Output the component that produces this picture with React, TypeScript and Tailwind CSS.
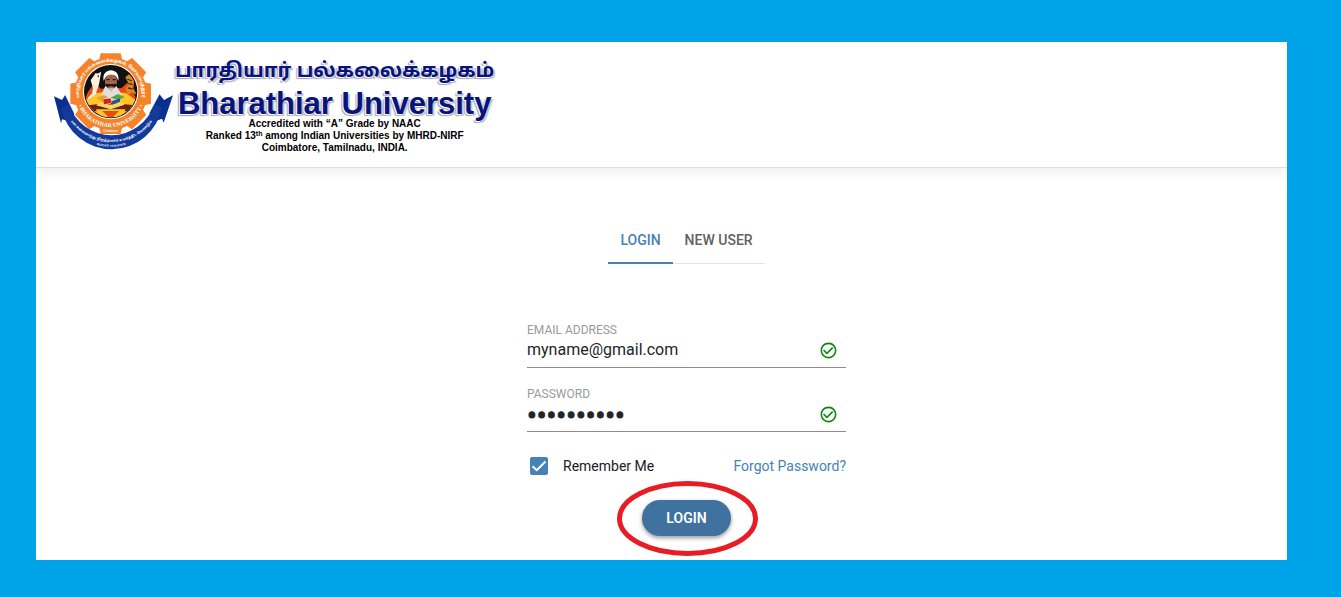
import { useState } from "react";
import type { InputHTMLAttributes } from "react";
import { MdCheckCircleOutline } from "react-icons/md";

const TEETH = [0, 45, 90, 135, 180, 225, 270, 315];

function Emblem() {
  return (
    <svg viewBox="30 24 375 312" className="h-[104px] w-[125px] shrink-0" role="img" aria-label="Bharathiar University emblem">
      <defs>
        <path id="ringTop" d="M124 190 A95 95 0 1 1 300 190" />
        <path id="ringBottom" d="M107 150 A105 105 0 0 0 317 150" />
        <path id="ribbonPath" d="M80 217 A152 152 0 0 0 350 217" />
        <path id="mottoPath" d="M150 301 A162 162 0 0 0 278 301" />
        <clipPath id="sceneClip"><circle cx="212" cy="149" r="77" /></clipPath>
      </defs>
      <path d="M42 163 L66 174 L76 158 L103 214 L96 232 L82 236 L66 232 L63 244 Z" fill="#0b2f8f" />
      <path d="M399 160 L372 174 L358 156 L328 212 L338 232 L350 236 L366 230 L371 242 Z" fill="#0b2f8f" />
      <g fill="#f5832b">
        {TEETH.map((angle) => (
          <path key={angle} d="M176 60 L182 34 H242 L248 60 Z" transform={`rotate(${angle} 212 155)`} />
        ))}
        <circle cx="212" cy="155" r="109" />
      </g>
      <path d="M64 200 A154 154 0 0 0 366 196 L343 186 A135 135 0 0 1 86 186 Z" fill="#123a9c" />
      <path d="M76 158 L103 214 M358 156 L328 212" stroke="#fff" strokeWidth="2" />
      <circle cx="212" cy="149" r="83" fill="#fff" />
      <circle cx="212" cy="149" r="80" fill="#111" />
      <g clipPath="url(#sceneClip)">
        <path d="M130 185 C140 152 152 136 166 122 L182 140 L245 138 L262 122 C274 140 286 160 294 182 V240 H130 Z" fill="#e84b16" />
        <path d="M132 178 L165 153 L210 149 L258 153 L292 178 L282 213 H144 Z" fill="#ffc426" />
        <path d="M144 190 L210 182 L285 190 L274 208 H154 Z" fill="#6e2014" />
        <path d="M168 202 H256 L245 236 H180 Z" fill="#ffc426" />
        <path d="M187 207 H237 L212 232 Z" fill="#e84b16" />
        <path d="M181 181 L210 188 L243 180 L254 188 L212 202 L168 190 Z" fill="#f7d763" />
        <path d="M167 93 C184 97 180 117 176 130 L167 157 L154 167 L159 138 L152 115 Z" fill="#fff0d8" />
        <path d="M171 99 L180 94 L177 111 M157 157 L145 170" stroke="#fff" strokeWidth="5" />
        <path d="M256 106 L267 97 L283 110 L280 139 L290 158 L275 151 L264 158 L257 142 L266 125 Z" fill="#e0862a" />
        <path d="M262 111 L276 117 M265 124 L278 128 M264 138 L278 141" stroke="#473016" strokeWidth="4" />
        <path d="M184 158 L196 132 H229 L246 159 L228 174 H198 Z" fill="#e4e0d8" />
        <ellipse cx="213" cy="119" rx="18" ry="24" fill="#a2674e" />
        <path d="M191 116 C182 76 242 73 235 116 L229 104 C221 95 205 96 197 105 Z" fill="#fff" />
        <path d="M195 130 C202 121 209 128 213 126 C219 128 224 121 232 130 L225 136 L213 132 L201 136 Z" fill="#1d1717" />
        <path d="M200 113 h9 m9 0 h9" stroke="#231715" strokeWidth="4" />
        <circle cx="213" cy="106" r="2" fill="#d11f24" />
        <path d="M205 138 L213 149 L222 138" fill="#bbb" />
        <path d="M169 169 L191 159 L211 169 L188 179 Z" fill="#e2a13a" />
        <path d="M211 167 L234 156 L254 165 L235 175 Z" fill="#55a84e" />
        <path d="M190 170 L212 164 L213 185 L194 186 Z" fill="#f6f0df" />
        <path d="M190 172 L212 169 L214 183 L192 187 Z" fill="#cf2424" />
        <path d="M215 178 L240 169 L240 179 L217 188 Z" fill="#2d4f9f" />
      </g>
      <g fill="#fff" textAnchor="middle">
        <text className="font-['Noto_Sans_Tamil','Noto_Sans',sans-serif] text-[13px] font-bold">
          <textPath href="#ringTop" startOffset="50%">பாரதியார் பல்கலைக்கழகம், கோயம்புத்தூர்</textPath>
        </text>
        <text className="font-['Liberation_Serif',serif] text-[17px] font-bold">
          <textPath href="#ringBottom" startOffset="50%">• BHARATHIAR UNIVERSITY •</textPath>
        </text>
        <text x="212" y="271" className="font-['Liberation_Sans',sans-serif] text-[8px] font-bold">Coimbatore</text>
        <text className="font-['Noto_Sans_Tamil','Noto_Sans',sans-serif] text-[10px] font-bold">
          <textPath href="#ribbonPath" startOffset="50%">பல கலைமாந்து திறத்தாரை உயர்த்திட வேண்டும்</textPath>
        </text>
        <text className="font-['Liberation_Sans',sans-serif] text-[8px] font-bold">
          <textPath href="#mottoPath" startOffset="50%">EDUCATE TO ELEVATE</textPath>
        </text>
      </g>
    </svg>
  );
}

function Field({ id, label, ...input }: { id: string; label: string } & InputHTMLAttributes<HTMLInputElement>) {
  const look = input.type === "password" ? "h-[30px] text-[29px] [-webkit-text-stroke:1px_#212529]" : "h-6 text-base";
  return (
    <div className="flex flex-col">
      <label htmlFor={id} className="text-xs leading-4 text-[#9a9a9a]">{label}</label>
      <div className="flex h-[30px] items-start border-b border-[#8c8c8c] pr-2">
        <input id={id} {...input} className={`min-w-0 flex-1 bg-transparent text-[#212529] outline-none ${look}`} />
        <MdCheckCircleOutline aria-hidden="true" className="mt-[3px] size-[19px] text-[#0c870c]" />
      </div>
    </div>
  );
}

export default function App() {
  const [tab, setTab] = useState("login");
  const active = "border-b-2 border-[#4682b4] pt-0.5 text-[#4682b4]";
  const idle = "border-b border-[#e4e4e4] pt-0.5 pb-px text-[#616161]";
  return (
    <div className="flex min-h-screen flex-col bg-[#00a2e8] pt-[42px] pr-[54px] pb-[37px] pl-9 font-[Roboto,sans-serif]">
      <div className="flex flex-1 flex-col overflow-hidden bg-white">
        <header className="flex h-[126px] items-start border-b border-[#dedede] pt-2 pl-[14px] shadow-[0_4px_12px_rgba(0,0,0,0.07)]">
          <Emblem />
          <div className="flex flex-col items-center pt-1 font-['Liberation_Sans',sans-serif] font-bold text-black">
            <p lang="ta" className="font-['Noto_Sans_Tamil','Noto_Sans',sans-serif] text-[20px] leading-9 whitespace-nowrap text-[#08137c] [text-shadow:-1px_1px_0_#fff,-2px_2px_1px_#a5a5ad,2px_2px_1px_#c5c5ce]">பாரதியார் பல்கலைக்கழகம்</p>
            <h1 className="text-[31px] leading-7 whitespace-nowrap text-[#08137c] [text-shadow:-1px_1px_0_#fff,-2px_2px_1px_#a5a5ad,2px_2px_1px_#c5c5ce]">Bharathiar University</h1>
            <p className="text-center text-[10px] leading-3 whitespace-nowrap">
              Accredited with “A” Grade by NAAC<br />
              Ranked 13<sup className="text-[7px] leading-none">th</sup> among Indian Universities by MHRD-NIRF<br />
              Coimbatore, Tamilnadu, INDIA.
            </p>
          </div>
        </header>
        <main className="flex flex-1 flex-col items-center pt-12 pl-[50px]">
          <div role="tablist" className="flex h-12 text-sm font-medium">
            <button type="button" role="tab" aria-selected={tab === "login"} onClick={() => setTab("login")} className={`px-3 ${tab === "login" ? active : idle}`}>LOGIN</button>
            <button type="button" role="tab" aria-selected={tab === "new"} onClick={() => setTab("new")} className={`px-3 ${tab === "new" ? active : idle}`}>NEW USER</button>
          </div>
          <form className="flex w-full max-w-[319px] flex-col pt-[58px]" onSubmit={(e) => e.preventDefault()}>
            <div className="flex flex-col gap-[18px]">
              <Field id="email" label="EMAIL ADDRESS" type="email" defaultValue="myname@gmail.com" />
              <Field id="password" label="PASSWORD" type="password" defaultValue="abcdefghij" />
            </div>
            <div className="flex items-center justify-between pt-6 text-sm leading-5">
              <label className="flex items-center gap-[15px] pl-[3px] text-[#212121]">
                <span className="grid size-[18px] place-items-center">
                  <input type="checkbox" defaultChecked className="peer col-start-1 row-start-1 size-[18px] appearance-none rounded-xs border-2 border-[#4682b4] checked:bg-[#4682b4]" />
                  <svg viewBox="0 0 18 18" aria-hidden="true" className="pointer-events-none invisible col-start-1 row-start-1 size-[18px] peer-checked:visible">
                    <path d="M2.500 9.200 L6.800 13.200 L15.500 4.500" fill="none" stroke="#fff" strokeWidth="2" />
                  </svg>
                </span>
                Remember Me
              </label>
              <a href="#forgot" className="text-[#4682b4]">Forgot Password?</a>
            </div>
            <div className="relative mt-6 self-center">
              <button type="submit" className="h-9 rounded-full bg-[#3f729f] px-6 text-sm font-semibold text-white shadow-[0_2px_4px_rgba(0,0,0,0.4)]">LOGIN</button>
              <svg viewBox="0 0 144 76" aria-hidden="true" className="pointer-events-none absolute top-1/2 left-1/2 h-[76px] w-[144px] max-w-none -translate-x-1/2 -translate-y-1/2">
                <ellipse cx="73.500" cy="38.500" rx="68" ry="35" fill="none" stroke="#e81c24" strokeWidth="5" />
              </svg>
            </div>
          </form>
        </main>
      </div>
    </div>
  );
}
